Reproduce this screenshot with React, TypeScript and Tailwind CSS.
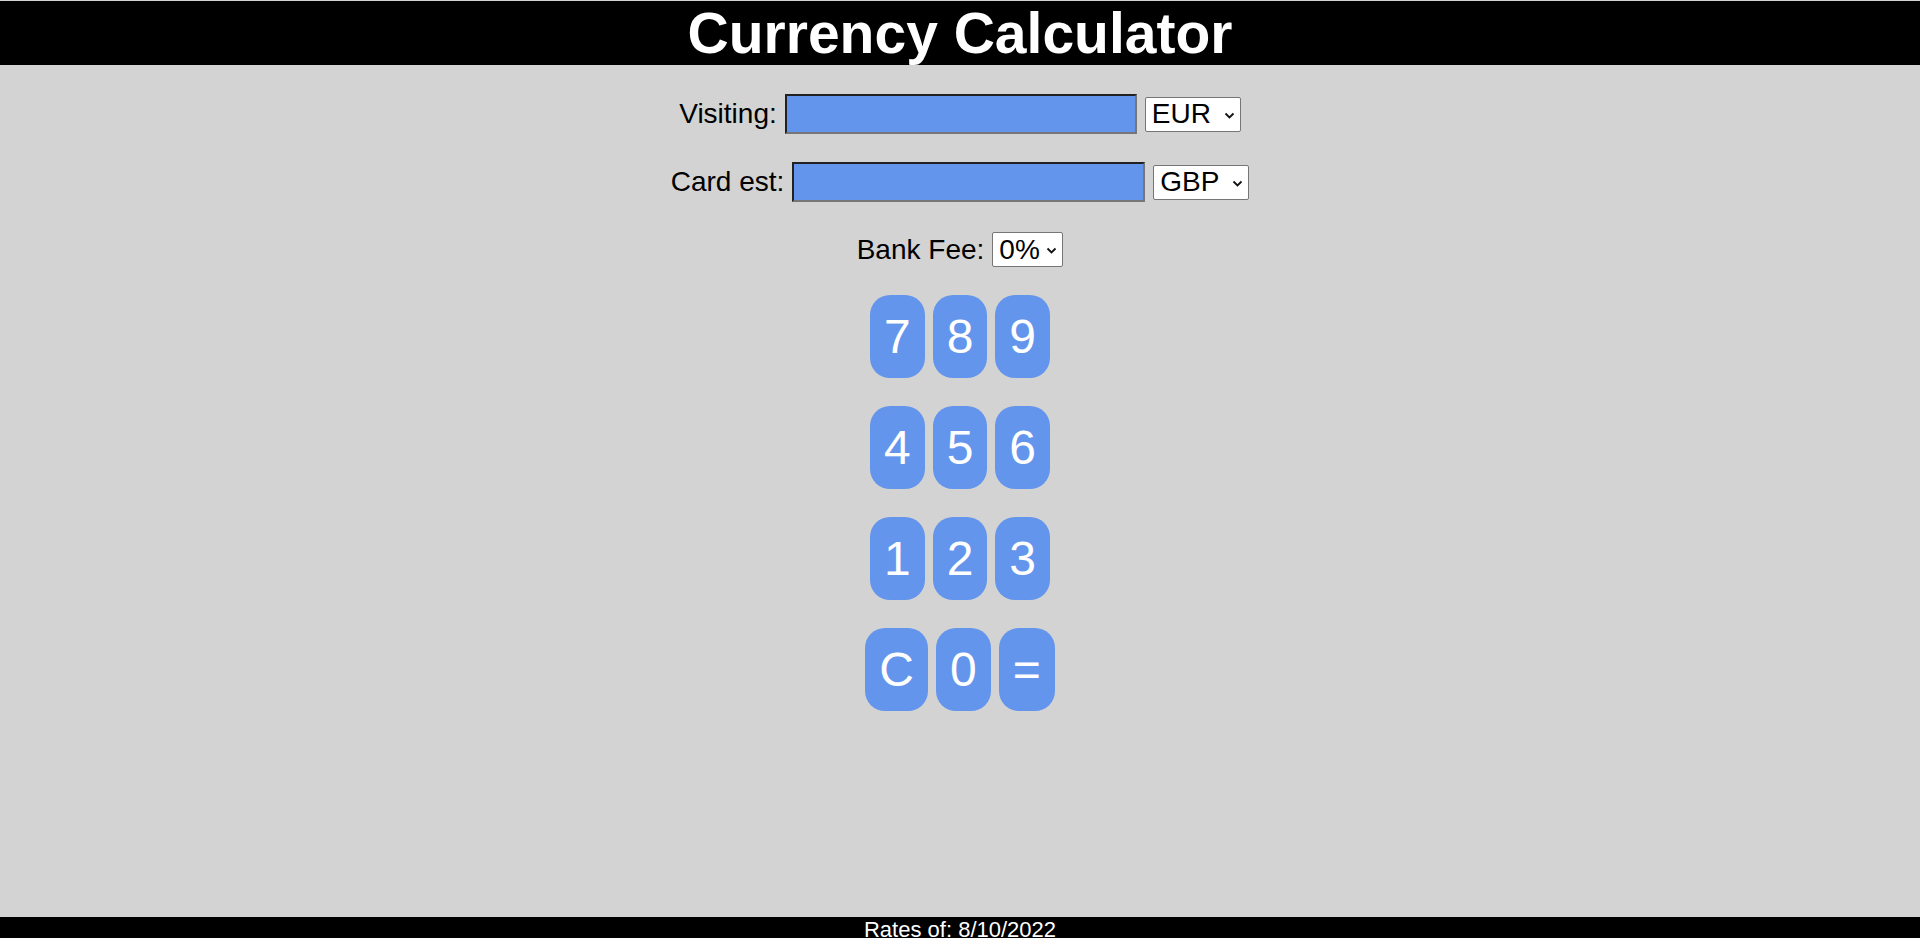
import React, { useState } from 'react';

const font = { fontFamily: '"Liberation Sans", Arial, sans-serif' };

// Select with native look: white box, thin grey border, small chevron
const CurrencySelect = ({
  value,
  options,
  width,
  onChange,
}: {
  value: string;
  options: string[];
  width: string;
  onChange: (v: string) => void;
}) => (
  <span className={`relative inline-flex ${width}`}>
    <select
      value={value}
      onChange={(e) => onChange(e.target.value)}
      className="h-[35px] w-full appearance-none rounded-[2px] border border-[#767676] bg-white pl-[6px] text-[28px] leading-none text-black outline-none"
    >
      {options.map((o) => (
        <option key={o} value={o}>
          {o}
        </option>
      ))}
    </select>
    <svg
      className="pointer-events-none absolute right-[6px] top-[15px]"
      width="11"
      height="7"
      viewBox="0 0 11 7"
      fill="none"
    >
      <path d="M1.5 1.5L5.5 5.5L9.5 1.5" stroke="#111" strokeWidth="1.8" />
    </svg>
  </span>
);

const App: React.FC = () => {
  const [visitCur, setVisitCur] = useState('EUR');
  const [cardCur, setCardCur] = useState('GBP');
  const [fee, setFee] = useState('0%');
  const [amount, setAmount] = useState('');

  const rows = [
    ['7', '8', '9'],
    ['4', '5', '6'],
    ['1', '2', '3'],
    ['C', '0', '='],
  ];

  const press = (k: string) => {
    if (k === 'C') setAmount('');
    else if (k !== '=') setAmount((a) => a + k);
  };

  return (
    <div className="flex h-screen flex-col overflow-hidden bg-[#d3d3d3] pt-px" style={font}>
      <header className="h-16 shrink-0 bg-black text-center text-[57px] font-bold leading-[64px] text-white">
        Currency Calculator
      </header>

      <main className="flex-1 text-[28px] leading-[normal] text-black">
        {/* Visiting */}
        <div className="mt-[29px] flex items-center justify-center gap-[8px]">
          <label>Visiting:</label>
          <input
            value={amount}
            onChange={(e) => setAmount(e.target.value)}
            className="h-[40px] w-[352px] border-2 border-[#767676] bg-[#6495ed] px-[2px] [border-style:inset] outline-none"
          />
          <CurrencySelect value={visitCur} options={['EUR', 'USD', 'GBP']} width="w-[96px]" onChange={setVisitCur} />
        </div>

        {/* Card estimate */}
        <div className="mt-[28px] flex items-center justify-center gap-[8px]">
          <label>Card est:</label>
          <input
            readOnly
            className="h-[40px] w-[353px] border-2 border-[#767676] bg-[#6495ed] px-[2px] [border-style:inset] outline-none"
          />
          <CurrencySelect value={cardCur} options={['GBP', 'EUR', 'USD']} width="w-[96px]" onChange={setCardCur} />
        </div>

        {/* Bank fee */}
        <div className="mt-[30px] flex items-center justify-center gap-[8px]">
          <label>Bank Fee:</label>
          <CurrencySelect value={fee} options={['0%', '1%', '2%', '3%']} width="w-[71px]" onChange={setFee} />
        </div>

        {/* Keypad */}
        <div className="mt-[28px] flex flex-col items-center gap-[28px]">
          {rows.map((row, i) => (
            <div key={i} className="flex gap-[8px]">
              {row.map((k) => (
                <button
                  key={k}
                  onClick={() => press(k)}
                  className="rounded-[20px] bg-[#6495ed] p-[14px] text-[48px] leading-[normal] text-white"
                >
                  {k}
                </button>
              ))}
            </div>
          ))}
        </div>
      </main>

      <footer className="h-[21px] shrink-0 overflow-hidden bg-black text-center text-[22px] leading-[normal] text-white">
        Rates of: 8/10/2022
      </footer>
    </div>
  );
};

export default App;
